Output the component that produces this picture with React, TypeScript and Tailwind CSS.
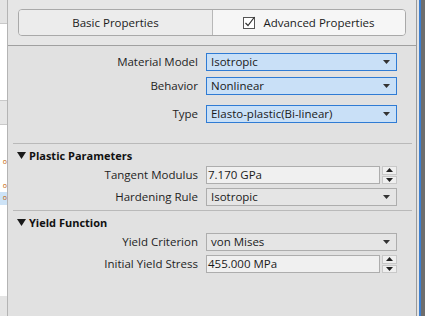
import React from "react";

const font = { fontFamily: '"Open Sans", "Noto Sans", sans-serif' };

function Caret() {
  return (
    <svg width="7" height="4" viewBox="0 0 7 4" className="shrink-0">
      <path d="M0 0 L7 0 L3.5 4 Z" fill="#333" />
    </svg>
  );
}

function Select({ value, active }: { value: string; active?: boolean }) {
  return (
    <div
      className={
        "flex h-[18px] w-[191px] items-center justify-between pl-[4px] pr-[6px] border " +
        (active
          ? "border-[#2f7bd4] bg-[#c9e0f7]"
          : "border-[#adadad] bg-[#e5e5e5]")
      }
    >
      <span className="text-[11.5px] leading-none text-[#1a1a1a]">{value}</span>
      <Caret />
    </div>
  );
}

function Spin({ value }: { value: string }) {
  return (
    <div className="flex h-[18px] w-[191px] items-stretch gap-[2px]">
      <div className="flex flex-1 items-center border border-[#adadad] bg-[#f0f0f0] pl-[1px]">
        <span className="text-[11.5px] leading-none text-[#1a1a1a]">{value}</span>
      </div>
      <div className="flex w-[15px] flex-col gap-[1px]">
        <div className="flex flex-1 items-center justify-center border border-[#c8c8c8] bg-[#efefef]">
          <svg width="7" height="4" viewBox="0 0 7 4">
            <path d="M0 4 L7 4 L3.5 0 Z" fill="#222" />
          </svg>
        </div>
        <div className="flex flex-1 items-center justify-center border border-[#c8c8c8] bg-[#efefef]">
          <svg width="7" height="4" viewBox="0 0 7 4">
            <path d="M0 0 L7 0 L3.5 4 Z" fill="#222" />
          </svg>
        </div>
      </div>
    </div>
  );
}

function Row({ label, children, className }: { label: string; children: React.ReactNode; className?: string }) {
  return (
    <div className={"flex items-center " + (className || "")}>
      <div className="w-[190px] text-right text-[11.5px] leading-none text-[#1e1e1e]">{label}</div>
      <div className="ml-[8px]">{children}</div>
    </div>
  );
}

function Section({ title }: { title: string }) {
  return (
    <div className="flex h-[22px] items-center pl-[9px]">
      <svg width="9" height="7" viewBox="0 0 9 7" className="mr-[3px]">
        <path d="M0 0 L9 0 L4.5 7 Z" fill="#1a1a1a" />
      </svg>
      <span className="text-[11px] font-bold leading-none text-[#111]">{title}</span>
    </div>
  );
}

export default function App() {
  return (
    <div className="flex h-[316px] w-[425px] overflow-hidden bg-[#e1e1e1]" style={font}>
      {/* left background window strip */}
      <div className="flex w-[7px] flex-col bg-white">
        <div className="h-[24px] bg-[#e4e4e4] border-b border-[#c9c9c9]" />
        <div className="h-[76px] bg-white" />
        <div className="h-[25px] bg-[#e6e6e6] border-y border-[#c9c9c9]" />
        <div className="h-[33px] bg-white" />
        <div className="flex h-[10px] justify-end bg-white text-[7px] leading-none text-[#c06000]">o</div>
        <div className="h-[14px] bg-white" />
        <div className="flex h-[10px] justify-end bg-white text-[7px] leading-none text-[#c06000]">o</div>
        <div className="flex h-[13px] justify-end bg-[#cde3f7] pt-[2px] text-[7px] leading-none text-[#c06000]">o</div>
        <div className="flex-1 bg-white" />
        <div className="h-[20px] bg-[#e4e4e4]" />
      </div>
      <div className="w-[1px] bg-[#b4b4b4]" />
      {/* main panel */}
      <div className="flex w-[409px] flex-col bg-[#e1e1e1]">
        <div className="h-[45px] bg-[#e6e6e6] pl-[10px] pt-[9px]">
          <div className="flex h-[27px] w-[388px] overflow-hidden rounded-[4px] border border-[#a9a9a9]">
            <div className="flex w-[194px] items-center justify-center bg-[#ececec] border-r border-[#b8b8b8]">
              <span className="text-[11.5px] leading-none text-[#1b1b1b]">Basic Properties</span>
            </div>
            <div className="flex flex-1 items-center justify-center bg-[#f6f6f6]">
              <svg width="14" height="14" viewBox="0 0 14 14" className="mr-[6px] -mt-[2px]">
                <rect x="0.5" y="2.5" width="11" height="11" fill="#fff" stroke="#555" />
                <path d="M2.5 8 L5 10.5 L11.5 2" fill="none" stroke="#333" strokeWidth="1.2" />
              </svg>
              <span className="text-[11.5px] leading-none text-[#1b1b1b]">Advanced Properties</span>
            </div>
          </div>
        </div>
        <div className="h-[1px] bg-[#a0a0a0]" />
        <Row label="Material Model" className="mt-[7px]">
          <Select value="Isotropic" active />
        </Row>
        <Row label="Behavior" className="mt-[6px]">
          <Select value="Nonlinear" active />
        </Row>
        <Row label="Type" className="mt-[10px]">
          <Select value="Elasto-plastic(Bi-linear)" active />
        </Row>
        <div className="ml-[5px] mr-[4px] mt-[20px] h-[1px] bg-[#b9b9b9]" />
        <Section title="Plastic Parameters" />
        <Row label="Tangent Modulus">
          <Spin value="7.170 GPa" />
        </Row>
        <Row label="Hardening Rule" className="mt-[4px]">
          <Select value="Isotropic" />
        </Row>
        <div className="ml-[5px] mr-[4px] mt-[4px] h-[1px] bg-[#b9b9b9]" />
        <Section title="Yield Function" />
        <Row label="Yield Criterion">
          <Select value="von Mises" />
        </Row>
        <Row label="Initial Yield Stress" className="mt-[4px]">
          <Spin value="455.000 MPa" />
        </Row>
      </div>
      <div className="w-[1px] bg-[#9a9a9a]" />
      {/* right strip */}
      <div className="flex w-[8px]">
        <div className="w-[2px] bg-[#e4e4e4]" />
        <div className="w-[2px] bg-[#3d7fd0]" />
        <div className="flex-1 bg-[#6e6e6e]" />
      </div>
    </div>
  );
}
